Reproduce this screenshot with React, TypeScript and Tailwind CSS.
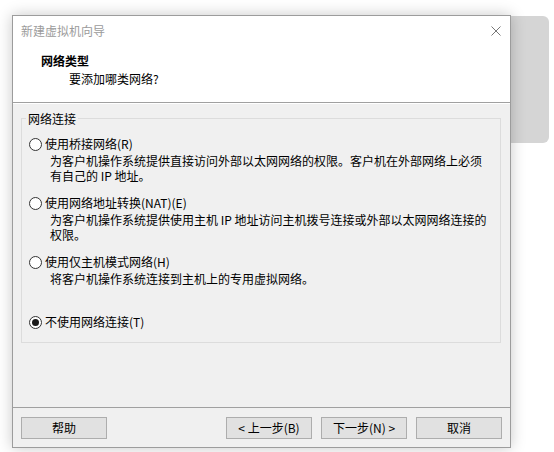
import React from "react";

type NetOption = {
  label: string;
  desc: string[];
  checked?: boolean;
};

const options: NetOption[] = [
  {
    label: "使用桥接网络(R)",
    desc: [
      "为客户机操作系统提供直接访问外部以太网网络的权限。客户机在外部网络上必须",
      "有自己的 IP 地址。",
    ],
  },
  {
    label: "使用网络地址转换(NAT)(E)",
    desc: [
      "为客户机操作系统提供使用主机 IP 地址访问主机拨号连接或外部以太网网络连接的",
      "权限。",
    ],
  },
  {
    label: "使用仅主机模式网络(H)",
    desc: ["将客户机操作系统连接到主机上的专用虚拟网络。"],
  },
  { label: "不使用网络连接(T)", desc: [], checked: true },
];

function Radio({ checked }: { checked?: boolean }) {
  return (
    <span className="flex h-[13px] w-[13px] shrink-0 items-center justify-center rounded-full border border-[#333333] bg-white">
      {checked && <span className="h-[7px] w-[7px] rounded-full bg-[#1a1a1a]" />}
    </span>
  );
}

function WinButton({ children }: { children: React.ReactNode }) {
  return (
    <button className="flex h-[22px] w-[86px] items-center justify-center border border-[#adadad] bg-[#e1e1e1] text-[12px] leading-[16px] text-black">
      {children}
    </button>
  );
}

export default function App() {
  return (
    <div className="relative h-[452px] w-[554px] overflow-hidden bg-white pl-[12px] pt-[15px] font-['Noto_Sans_CJK_SC','Microsoft_YaHei',sans-serif] text-[12px] text-black">
      {/* 后面的窗口 */}
      <div className="absolute left-[480px] top-[16px] h-[127px] w-[69px] rounded-[6px] bg-[#d5d5d5]" />

      <div className="relative z-10 flex h-[433px] w-[499px] flex-col border border-[#9c9c9c] bg-[#f0f0f0] shadow-[0_0_14px_rgba(0,0,0,0.22)]">
        {/* 标题 + 页眉 */}
        <div className="flex h-[87px] flex-col border-b border-[#a0a0a0] bg-white">
          <div className="flex h-[30px] items-center justify-between pl-[8px] pr-[9px]">
            <span className="leading-[16px] text-[#9b9b9b]">新建虚拟机向导</span>
            <svg width="10" height="10" viewBox="0 0 10 10" className="text-[#777777]">
              <path d="M0.5 0.5 L9.5 9.5 M9.5 0.5 L0.5 9.5" stroke="currentColor" strokeWidth="1" fill="none" />
            </svg>
          </div>
          <div className="mt-[7px] pl-[28px] font-bold leading-[16px]">网络类型</div>
          <div className="mt-[2px] pl-[56px] leading-[16px]">要添加哪类网络?</div>
        </div>

        {/* 内容 */}
        <div className="flex-1 border-t border-white pl-[8px] pt-[14px]">
          <div className="relative h-[225px] w-[480px] border border-[#dcdcdc] pl-[7px] pt-[17px]">
            <span className="absolute -top-[8px] left-[4px] bg-[#f0f0f0] px-[2px] leading-[16px]">
              网络连接
            </span>
            {options.map((opt, i) => (
              <div
                key={opt.label}
                className={i === 0 ? "" : i === options.length - 1 ? "mt-[28px]" : "mt-[12px]"}
              >
                <div className="flex h-[16px] items-center gap-[3px]">
                  <Radio checked={opt.checked} />
                  <span className="leading-[16px]">{opt.label}</span>
                </div>
                {opt.desc.length > 0 && (
                  <div className="mt-[1px] pl-[21px]">
                    {opt.desc.map((line) => (
                      <div key={line} className="whitespace-nowrap leading-[15px]">
                        {line}
                      </div>
                    ))}
                  </div>
                )}
              </div>
            ))}
          </div>
        </div>

        {/* 按钮 */}
        <div className="flex h-[40px] items-start justify-between border-t border-[#a0a0a0] px-[8px] pt-[9px]">
          <WinButton>帮助</WinButton>
          <div className="flex gap-[9px]">
            <WinButton>&lt; 上一步(B)</WinButton>
            <WinButton>下一步(N) &gt;</WinButton>
            <WinButton>取消</WinButton>
          </div>
        </div>
      </div>
    </div>
  );
}
